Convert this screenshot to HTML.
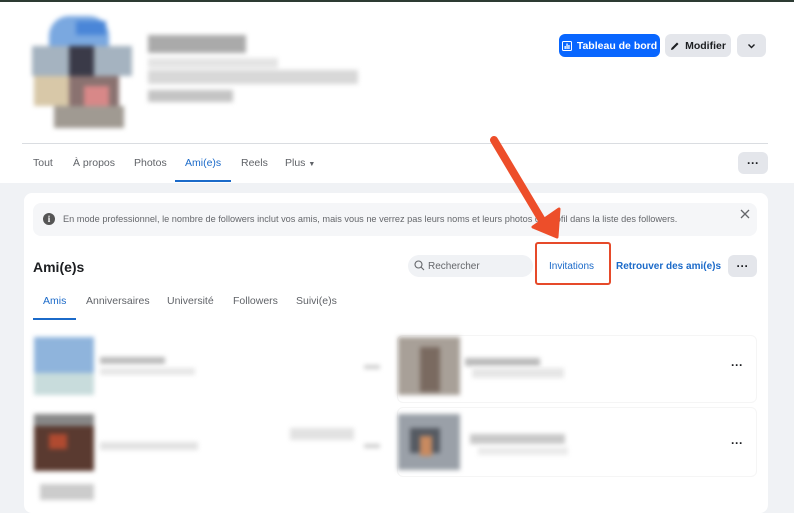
<!DOCTYPE html>
<html><head><meta charset="utf-8"><style>
*{margin:0;padding:0;box-sizing:border-box}
body{width:794px;height:500px;overflow:hidden;background:#f0f2f5;font-family:"Liberation Sans",Arial,sans-serif;position:relative}
.abs{position:absolute}
.top{left:0;top:0;width:794px;height:183px;background:#fff}
.px{position:absolute}
.btn{position:absolute;border-radius:6px;font-size:10.5px;font-weight:bold;display:flex;align-items:center;justify-content:center}
.tab{position:absolute;font-size:10.5px;color:#606368}
.card{left:24px;top:193px;width:744px;height:320px;background:#fff;border-radius:8px}
.blur{position:absolute;filter:blur(2.5px)}
</style></head><body>
<div class="abs top"></div>
<div class="abs" style="left:0;top:0;width:794px;height:2px;background:#2d3b33"></div>

<!-- avatar -->
<div class="blur" style="left:24px;top:16px;width:115px;height:112px">
 <div class="px" style="left:25px;top:0;width:60px;height:30px;background:#7aa8e0;border-radius:20px 20px 0 0"></div>
 <div class="px" style="left:52px;top:5px;width:30px;height:14px;background:#4a86d8"></div>
 <div class="px" style="left:8px;top:30px;width:100px;height:30px;background:#a5b3c0"></div>
 <div class="px" style="left:45px;top:30px;width:25px;height:50px;background:#3a3a48"></div>
 <div class="px" style="left:10px;top:60px;width:35px;height:30px;background:#d8c8a8"></div>
 <div class="px" style="left:45px;top:60px;width:50px;height:35px;background:#8a7270"></div>
 <div class="px" style="left:60px;top:70px;width:25px;height:20px;background:#d88888"></div>
 <div class="px" style="left:30px;top:90px;width:70px;height:22px;background:#a09a92"></div>
</div>
<!-- name blur -->
<div class="blur" style="left:148px;top:30px;width:210px;height:75px">
 <div class="px" style="left:0;top:5px;width:98px;height:18px;background:#aaa"></div>
 <div class="px" style="left:0;top:28px;width:130px;height:10px;background:#e4e4e4"></div>
 <div class="px" style="left:0;top:40px;width:210px;height:14px;background:#d8d8d8"></div>
 <div class="px" style="left:0;top:60px;width:85px;height:12px;background:#c4c4c4"></div>
</div>

<div class="btn" style="left:559px;top:34px;width:101px;height:23px;background:#0866ff;color:#fff">
 <svg width="10" height="10" viewBox="0 0 10 10" style="margin-right:5px"><rect x=".5" y=".5" width="9" height="9" rx="1" fill="none" stroke="#fff"/><rect x="2.5" y="5" width="1.3" height="3" fill="#fff"/><rect x="4.4" y="2.5" width="1.3" height="5.5" fill="#fff"/><rect x="6.3" y="4" width="1.3" height="4" fill="#fff"/></svg>Tableau de bord</div>
<div class="btn" style="left:665px;top:34px;width:66px;height:23px;background:#e4e6eb;color:#1c1e21">
 <svg width="10" height="10" viewBox="0 0 10 10" style="margin-right:5px"><path d="M1 9 L1.5 7 L7 1.5 L8.5 3 L3 8.5Z" fill="#1c1e21"/></svg>Modifier</div>
<div class="btn" style="left:737px;top:34px;width:29px;height:23px;background:#e4e6eb">
 <svg width="9" height="6" viewBox="0 0 9 6"><path d="M1.5 1.5 L4.5 4.5 L7.5 1.5" fill="none" stroke="#1c1e21" stroke-width="1.4"/></svg></div>

<div class="abs" style="left:22px;top:143px;width:746px;height:1px;background:#dadde1"></div>
<div class="tab" style="left:33px;top:157px">Tout</div>
<div class="tab" style="left:73px;top:157px">À propos</div>
<div class="tab" style="left:134px;top:157px">Photos</div>
<div class="tab" style="left:185px;top:157px;color:#1b6ac9">Ami(e)s</div>
<div class="tab" style="left:241px;top:157px">Reels</div>
<div class="tab" style="left:285px;top:157px">Plus <span style="font-size:7px">▼</span></div>
<div class="abs" style="left:175px;top:180px;width:56px;height:2px;background:#1b6ac9"></div>
<div class="btn" style="left:738px;top:152px;width:30px;height:22px;background:#e4e6eb;color:#1c1e21;font-size:12px">···</div>

<div class="abs card"></div>
<div class="abs" style="left:33px;top:203px;width:724px;height:33px;background:#f5f6f8;border-radius:8px"></div>
<div class="abs" style="left:43px;top:213px;width:12px;height:12px;border-radius:50%;background:#555;color:#fff;font-size:9px;font-weight:bold;text-align:center;line-height:12px;font-family:'Liberation Serif',serif">i</div>
<div class="abs" style="left:63px;top:214px;font-size:9.2px;color:#65676b;white-space:nowrap">En mode professionnel, le nombre de followers inclut vos amis, mais vous ne verrez pas leurs noms et leurs photos de profil dans la liste des followers.</div>
<svg class="abs" style="left:740px;top:209px" width="10" height="10" viewBox="0 0 10 10"><path d="M1 1L9 9M9 1L1 9" stroke="#65676b" stroke-width="1.3"/></svg>

<div class="abs" style="left:33px;top:259px;font-size:14px;font-weight:bold;color:#1c1e21">Ami(e)s</div>
<div class="abs" style="left:408px;top:255px;width:125px;height:22px;background:#f0f2f5;border-radius:11px"></div>
<svg class="abs" style="left:414px;top:260px" width="11" height="11" viewBox="0 0 11 11"><circle cx="4.5" cy="4.5" r="3.5" fill="none" stroke="#65676b" stroke-width="1.1"/><path d="M7 7L10 10" stroke="#65676b" stroke-width="1.1"/></svg>
<div class="abs" style="left:428px;top:261px;font-size:10px;color:#65676b">Rechercher</div>
<div class="abs" style="left:549px;top:261px;font-size:10px;color:#1b6ac9">Invitations</div>
<div class="abs" style="left:616px;top:261px;font-size:10px;font-weight:bold;color:#1b6ac9">Retrouver des ami(e)s</div>
<div class="btn" style="left:728px;top:255px;width:29px;height:22px;background:#e4e6eb;color:#1c1e21;font-size:12px">···</div>

<div class="tab" style="left:43px;top:295px;color:#1b6ac9">Amis</div>
<div class="tab" style="left:86px;top:295px">Anniversaires</div>
<div class="tab" style="left:167px;top:295px">Université</div>
<div class="tab" style="left:233px;top:295px">Followers</div>
<div class="tab" style="left:296px;top:295px">Suivi(e)s</div>
<div class="abs" style="left:33px;top:318px;width:43px;height:2px;background:#1b6ac9"></div>

<!-- rows -->
<div class="abs" style="left:397px;top:335px;width:360px;height:68px;border:1px solid #f5f5f5;border-radius:6px"></div>
<div class="abs" style="left:397px;top:407px;width:360px;height:70px;border:1px solid #f5f5f5;border-radius:6px"></div>
<div class="blur" style="left:34px;top:337px;width:60px;height:58px;background:#8fb4dc"><div class="px" style="left:0;top:36px;width:60px;height:22px;background:#c8dcdc"></div></div>
<div class="blur" style="left:100px;top:357px;width:65px;height:7px;background:#bbb"></div>
<div class="blur" style="left:100px;top:368px;width:95px;height:7px;background:#e6e6e6"></div>
<div class="blur" style="left:364px;top:365px;width:16px;height:4px;background:#ccc"></div>
<div class="blur" style="left:34px;top:414px;width:60px;height:57px;background:#5a3a30"><div class="px" style="left:0;top:0;width:60px;height:12px;background:#888"></div><div class="px" style="left:15px;top:20px;width:18px;height:15px;background:#b04a30"></div></div>
<div class="blur" style="left:100px;top:442px;width:98px;height:8px;background:#e2e2e2"></div>
<div class="blur" style="left:290px;top:428px;width:64px;height:12px;background:#e2e2e2"></div>
<div class="blur" style="left:364px;top:444px;width:16px;height:4px;background:#ccc"></div>
<div class="blur" style="left:40px;top:484px;width:54px;height:16px;background:#ccc"></div>
<div class="blur" style="left:398px;top:337px;width:62px;height:58px;background:#a8a098"><div class="px" style="left:22px;top:10px;width:20px;height:45px;background:#7a6a60"></div></div>
<div class="blur" style="left:465px;top:358px;width:75px;height:8px;background:#bbb"></div>
<div class="blur" style="left:472px;top:368px;width:92px;height:10px;background:#e6e6e6"></div>
<div class="blur" style="left:398px;top:414px;width:62px;height:56px;background:#9aa0a8"><div class="px" style="left:12px;top:14px;width:30px;height:25px;background:#555a62"></div><div class="px" style="left:22px;top:22px;width:12px;height:20px;background:#c88a60"></div></div>
<div class="blur" style="left:470px;top:434px;width:95px;height:10px;background:#c8c8c8"></div>
<div class="blur" style="left:478px;top:447px;width:90px;height:8px;background:#eaeaea"></div>
<div class="abs" style="left:731px;top:358px;font-size:12px;font-weight:bold;color:#1c1e21">···</div>
<div class="abs" style="left:731px;top:436px;font-size:12px;font-weight:bold;color:#1c1e21">···</div>

<!-- annotation -->
<div class="abs" style="left:535px;top:242px;width:76px;height:43px;border:2px solid #e64a2a;border-radius:3px"></div>
<svg class="abs" style="left:0;top:0" width="794" height="500" viewBox="0 0 794 500">
 <path d="M494 140 L543 222" stroke="#ed4e2a" stroke-width="8" stroke-linecap="round"/>
 <path d="M533 227 L557 237 L559 209Z" fill="#ed4e2a" stroke="#ed4e2a" stroke-width="3" stroke-linejoin="round"/>
</svg>
</body></html>
